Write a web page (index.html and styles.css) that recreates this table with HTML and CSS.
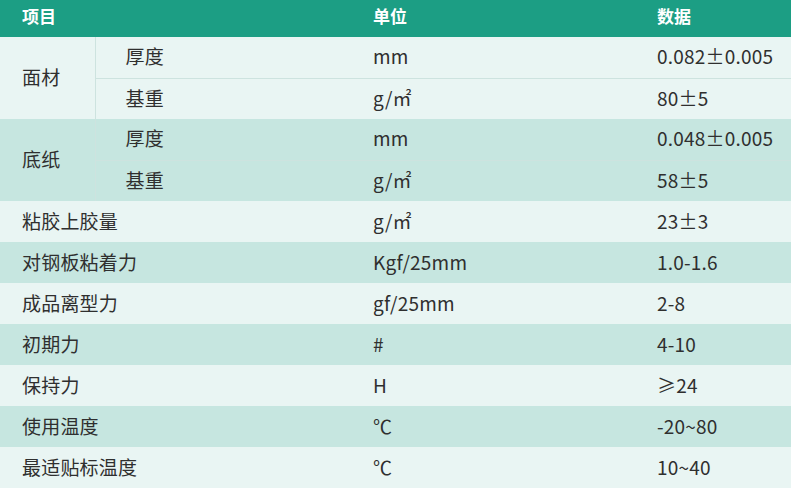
FILE: index.html
```html
<!DOCTYPE html>
<html lang="zh-CN">
<head>
<meta charset="utf-8">
<link rel="stylesheet" href="styles.css">
</head>
<body>
<table class="spec">
  <colgroup>
    <col class="c-group"><col class="c-sub"><col class="c-unit"><col class="c-data">
  </colgroup>
  <thead>
    <tr class="head">
      <th colspan="2" class="first">项目</th>
      <th>单位</th>
      <th>数据</th>
    </tr>
  </thead>
  <tbody>
    <tr class="light">
      <td rowspan="2" class="group">面材</td>
      <td class="sub">厚度</td><td>mm</td><td>0.082±0.005</td>
    </tr>
    <tr class="light">
      <td class="sub split">基重</td><td class="split">g/㎡</td><td class="split">80±5</td>
    </tr>
    <tr class="dark">
      <td rowspan="2" class="group">底纸</td>
      <td class="sub">厚度</td><td>mm</td><td>0.048±0.005</td>
    </tr>
    <tr class="dark">
      <td class="sub split">基重</td><td class="split">g/㎡</td><td class="split">58±5</td>
    </tr>
    <tr class="light"><td colspan="2" class="first">粘胶上胶量</td><td>g/㎡</td><td>23±3</td></tr>
    <tr class="dark"><td colspan="2" class="first">对钢板粘着力</td><td>Kgf/25mm</td><td>1.0-1.6</td></tr>
    <tr class="light"><td colspan="2" class="first">成品离型力</td><td>gf/25mm</td><td>2-8</td></tr>
    <tr class="dark"><td colspan="2" class="first">初期力</td><td>#</td><td>4-10</td></tr>
    <tr class="light"><td colspan="2" class="first">保持力</td><td>H</td><td>≥24</td></tr>
    <tr class="dark"><td colspan="2" class="first">使用温度</td><td>℃</td><td>-20~80</td></tr>
    <tr class="light"><td colspan="2" class="first">最适贴标温度</td><td>℃</td><td>10~40</td></tr>
  </tbody>
</table>
</body>
</html>
```
FILE: styles.css
```css
html, body {
  margin: 0;
  padding: 0;
  background: #e9f5f3;
}
.spec {
  width: 791px;
  border-collapse: collapse;
  table-layout: fixed;
  font-family: "Noto Sans CJK SC", "Noto Sans", sans-serif;
  font-size: 19px;
  letter-spacing: 0.2px;
  color: #2f2f2f;
}
.c-group { width: 95px; }
.c-sub { width: 278px; }
.c-unit { width: 284px; }
.c-data { width: 134px; }
.spec th, .spec td {
  padding: 0;
  text-align: left;
  vertical-align: middle;
  white-space: nowrap;
  line-height: 1.2;
}
.head th {
  height: 37px;
  box-sizing: border-box;
  padding-bottom: 4px;
  background: #1c9e84;
  color: #ffffff;
  font-weight: 700;
  font-size: 17px;
  letter-spacing: 0;
}
.spec td {
  height: 41px;
  padding-bottom: 1px;
  box-sizing: border-box;
}
.spec th.first, .spec td.first, .spec td.group {
  padding-left: 22px;
}
.spec td.group {
  border-right: 1px solid #cde3df;
}
.spec td.sub {
  padding-left: 30px;
}
.spec td.split {
  border-top: 1px solid #cde3df;
}
.light td { background: #e9f5f3; }
.dark td { background: #c6e6e0; }
```
